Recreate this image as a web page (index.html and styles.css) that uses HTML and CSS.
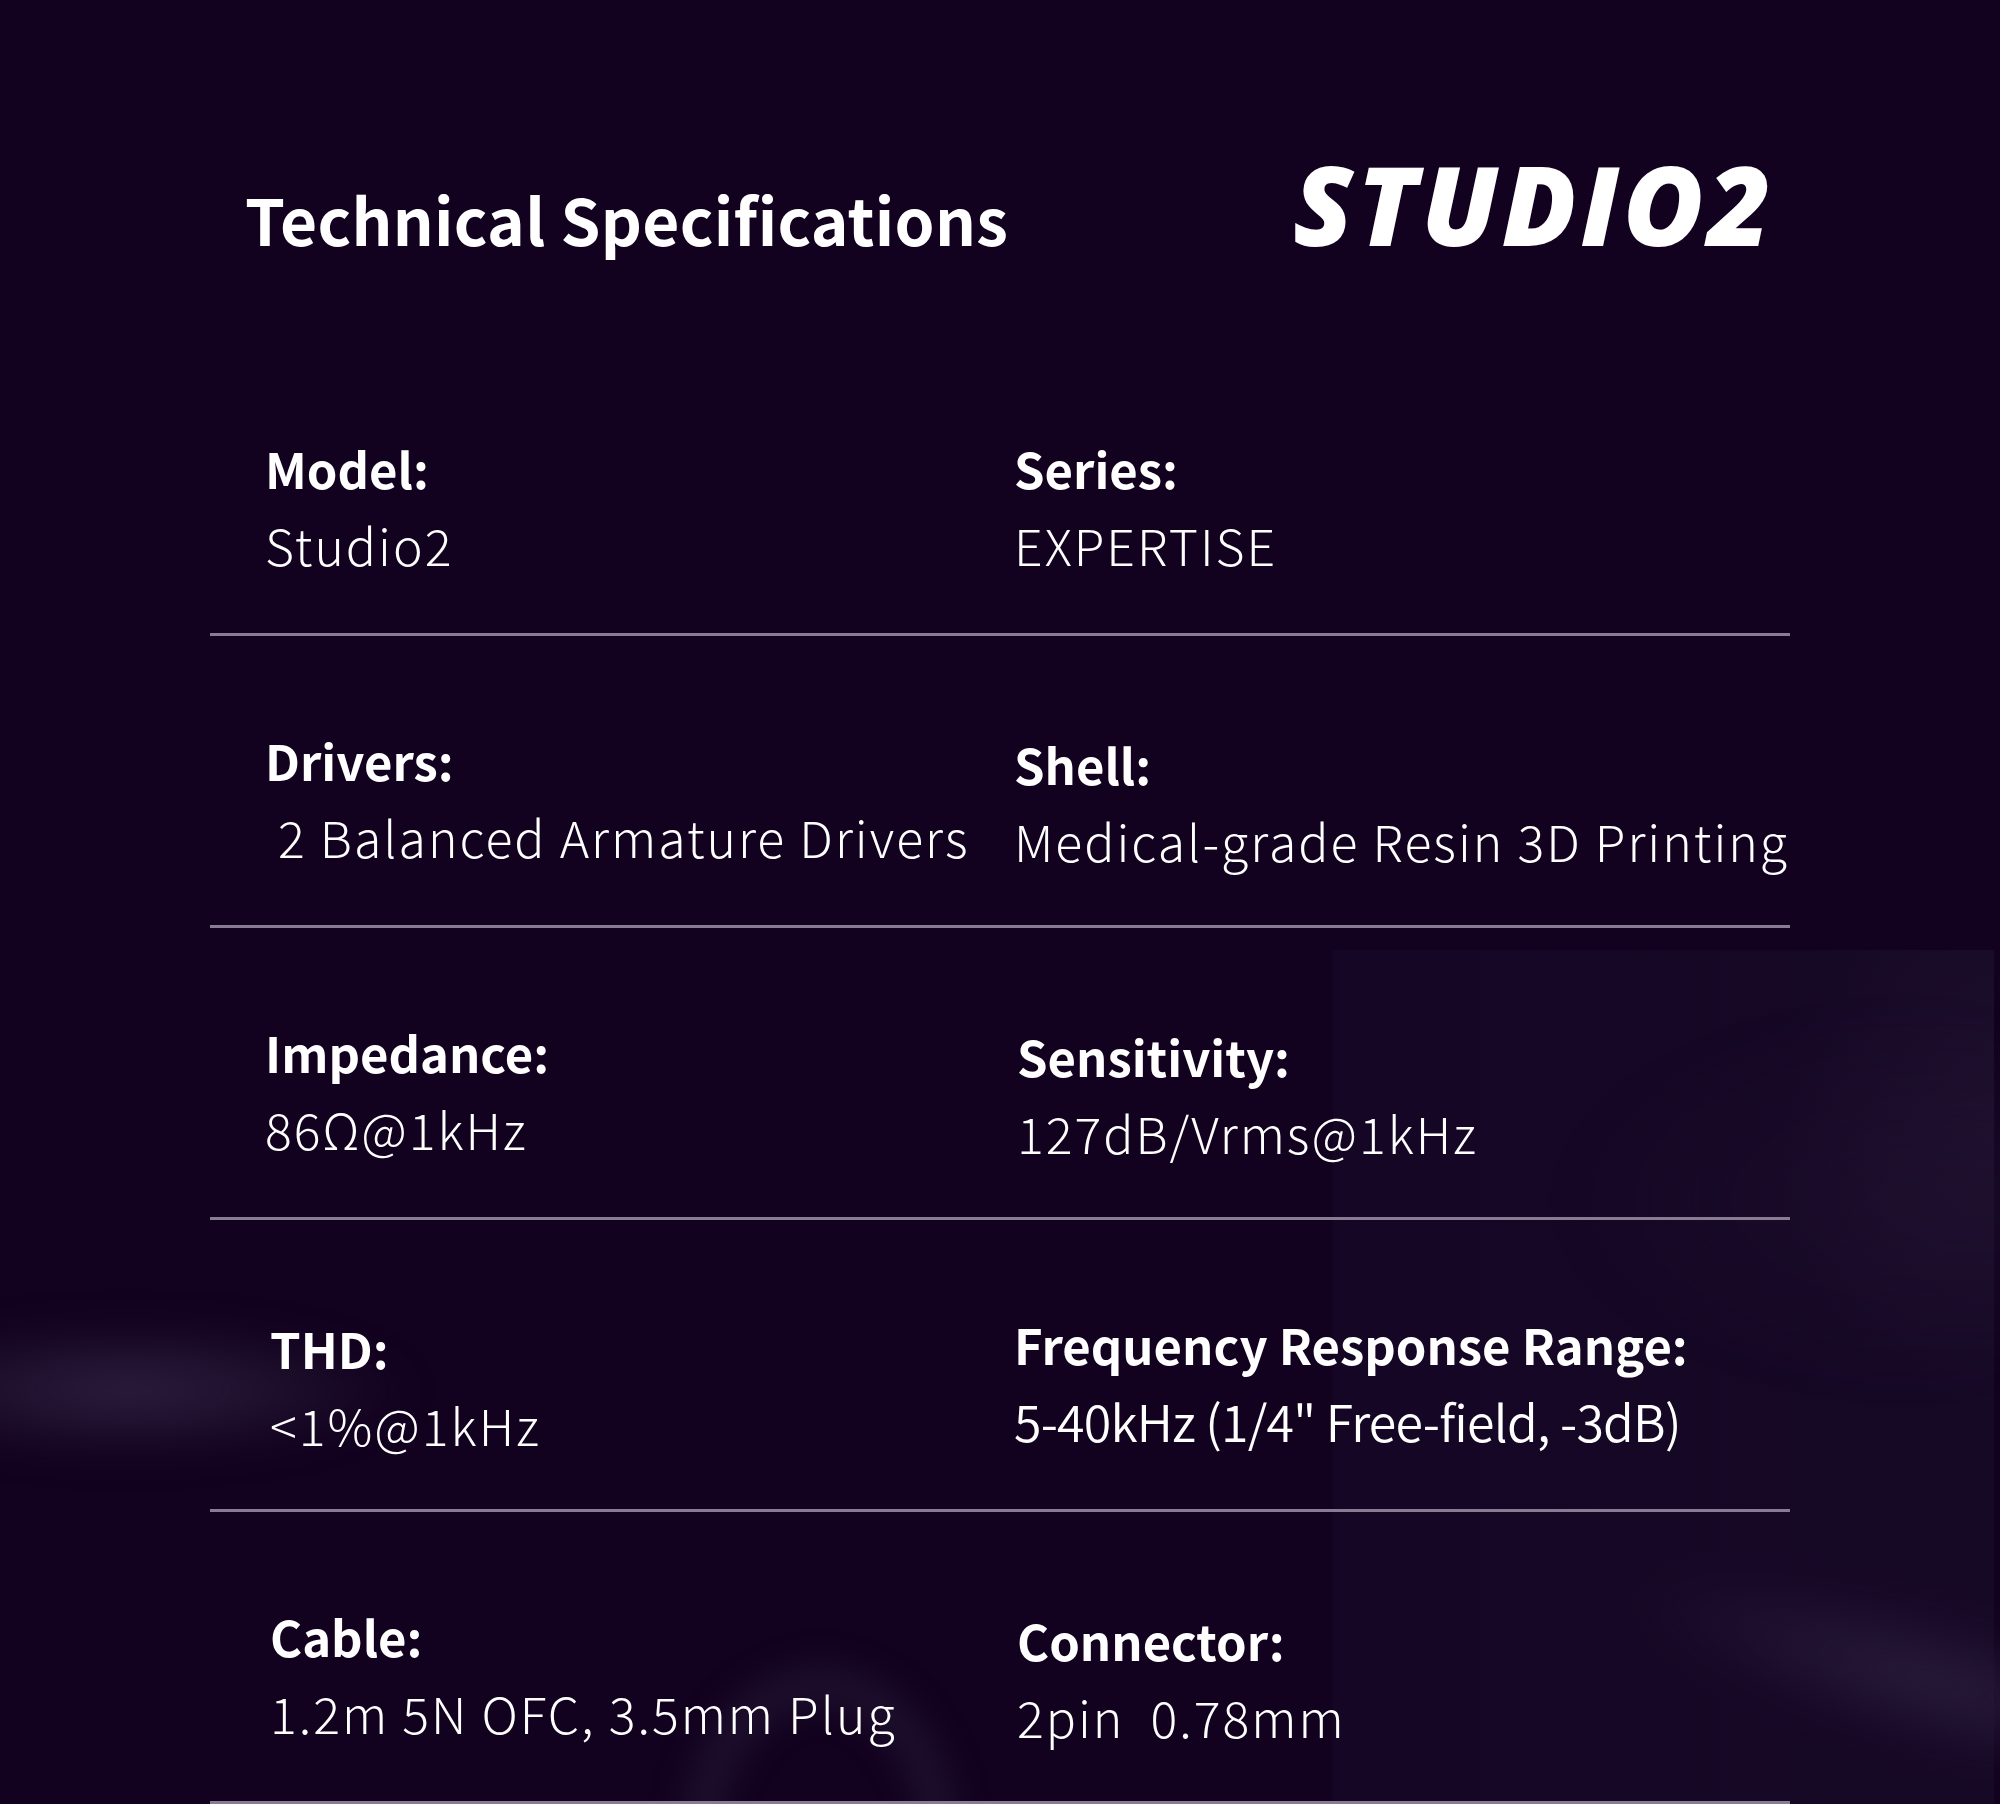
FILE: index.html
```html
<!DOCTYPE html>
<html lang="en">
<head>
<meta charset="utf-8">
<title>Studio2 Technical Specifications</title>
<link rel="stylesheet" href="styles.css">
</head>
<body>
<main class="sheet">
  <div class="backdrop" aria-hidden="true">
    <div class="panel"></div>
    <div class="smoke smoke-left"></div>
    <div class="smoke smoke-arc"></div>
    <div class="smoke smoke-right"></div>
    <div class="smoke smoke-right2"></div>
  </div>
  <header class="head">
    <h1 class="title">Technical Specifications</h1>
    <div class="brand">STUDIO2</div>
  </header>
  <section class="specs">
    <div class="row">
      <div class="cell"><div class="label">Model:</div><div class="value">Studio2</div></div>
      <div class="cell"><div class="label">Series:</div><div class="value">EXPERTISE</div></div>
    </div>
    <div class="row">
      <div class="cell"><div class="label">Drivers:</div><div class="value">&nbsp;2 Balanced Armature Drivers</div></div>
      <div class="cell cell-low"><div class="label">Shell:</div><div class="value">Medical-grade Resin 3D Printing</div></div>
    </div>
    <div class="row">
      <div class="cell"><div class="label">Impedance:</div><div class="value">86Ω@1kHz</div></div>
      <div class="cell cell-low cell-nudge"><div class="label">Sensitivity:</div><div class="value">127dB/Vrms@1kHz</div></div>
    </div>
    <div class="row">
      <div class="cell cell-low cell-indent"><div class="label">THD:</div><div class="value">&lt;1%@1kHz</div></div>
      <div class="cell"><div class="label">Frequency Response Range:</div><div class="value value-tight">5-40kHz (1/4" Free-field, -3dB)</div></div>
    </div>
    <div class="row">
      <div class="cell cell-indent"><div class="label">Cable:</div><div class="value">1.2m 5N OFC, 3.5mm Plug</div></div>
      <div class="cell cell-low cell-nudge"><div class="label">Connector:</div><div class="value">2pin&nbsp; 0.78mm</div></div>
    </div>
  </section>
</main>
</body>
</html>
```
FILE: styles.css
```css
* { box-sizing: border-box; }

html, body {
  margin: 0;
  padding: 0;
}

body {
  background: #12021f;
  color: #ffffff;
  font-family: "Noto Sans CJK SC", "Noto Sans", sans-serif;
}

.sheet {
  position: relative;
  width: 2000px;
  height: 1804px;
  overflow: hidden;
}

.backdrop {
  position: absolute;
  left: 0;
  top: 950px;
  width: 2000px;
  height: 854px;
  z-index: 0;
}

.panel {
  position: absolute;
  left: 1333px;
  top: 0;
  width: 664px;
  height: 854px;
  background:
    radial-gradient(ellipse 300px 420px at 100% 20%, rgba(38, 24, 54, 0.45), rgba(38, 24, 54, 0) 70%),
    linear-gradient(90deg, #140624 0%, #160926 100%);
  border-right: 3px solid #110320;
}

.smoke {
  position: absolute;
  border-radius: 50%;
  filter: blur(18px);
}

.smoke-left {
  left: -140px;
  top: 370px;
  width: 560px;
  height: 140px;
  background: radial-gradient(ellipse at 48% 50%, rgba(50, 36, 68, 0.85), rgba(50, 36, 68, 0) 70%);
}

.smoke-arc {
  left: 680px;
  top: 715px;
  width: 280px;
  height: 360px;
  border: 40px solid rgba(44, 30, 62, 0.45);
  background: transparent;
  filter: blur(16px);
}

.smoke-right {
  left: 1620px;
  top: 640px;
  width: 480px;
  height: 140px;
  transform: rotate(16deg);
  background: radial-gradient(ellipse at 65% 50%, rgba(46, 32, 64, 0.75), rgba(46, 32, 64, 0) 70%);
}

.smoke-right2 {
  left: 1560px;
  top: 60px;
  width: 560px;
  height: 380px;
  background: radial-gradient(ellipse at 70% 50%, rgba(34, 20, 50, 0.4), rgba(34, 20, 50, 0) 70%);
}

.head {
  position: relative;
  z-index: 1;
  display: flex;
  align-items: baseline;
  padding: 143px 0 0 245px;
  height: 344px;
}

.title {
  margin: 0;
  font-size: 64px;
  font-weight: 700;
  line-height: 76px;
  width: 1048px;
  letter-spacing: 0.3px;
}

.brand {
  font-family: "Open Sans", "Noto Sans", sans-serif;
  font-style: italic;
  font-weight: 800;
  font-size: 110px;
  line-height: 120px;
  letter-spacing: 3.5px;
}

.specs {
  position: relative;
  z-index: 1;
  margin-left: 210px;
  width: 1580px;
}

.row {
  display: grid;
  grid-template-columns: 749px 1fr;
  height: 292px;
  border-bottom: 3px solid #877c93;
  padding-left: 55px;
}

.cell {
  padding-top: 94px;
  white-space: nowrap;
}

.cell-low { padding-top: 98px; }
.cell-nudge { padding-left: 3px; }
.cell-indent { padding-left: 5px; }

.label {
  font-size: 49px;
  font-weight: 700;
  line-height: 60px;
}

.value {
  margin-top: 16px;
  font-size: 50px;
  font-weight: 300;
  line-height: 60px;
  letter-spacing: 2px;
}

.value-tight {
  font-weight: 350;
  letter-spacing: -0.75px;
}
```
